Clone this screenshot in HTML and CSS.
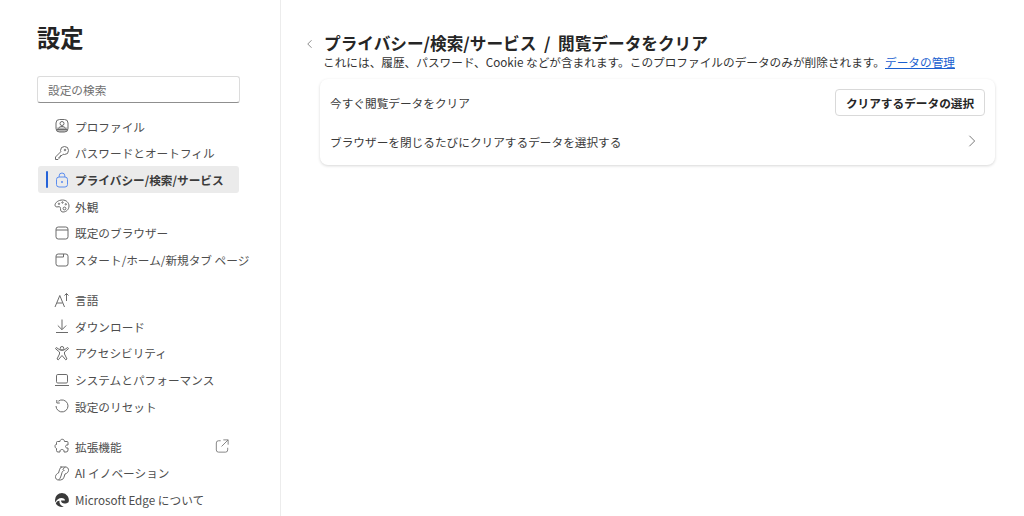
FILE: index.html
```html
<!DOCTYPE html>
<html lang="ja">
  <head>
    <meta charset="UTF-8" />
    <meta name="viewport" content="width=device-width, initial-scale=1.0" />
    <title>設定</title>
    <link rel="stylesheet" href="styles.css">
  </head>
  <body>
    <div class="page">
      <aside class="sidebar">
        <h1 class="sidebar-title">設定</h1>
        <input class="search" type="text" placeholder="設定の検索" />
        <nav class="nav">
          <div class="nav-group">
            <a class="nav-item"><svg class="icon" viewBox="0 0 16 16"><path class="icon-fill" d="M2.500 9.500h11V11a3 3 0 0 1-3 3h-5a3 3 0 0 1-3-3Z"/><rect x="2" y="1.500" width="12" height="12.500" rx="3.500"/><circle cx="8" cy="5.500" r="2"/><path d="M4.500 10.500c.5-1.500 2-2 3.500-2s3 .5 3.500 2M2.500 11.500h11"/></svg>プロファイル</a>
            <a class="nav-item"><svg class="icon" viewBox="0 0 16 16"><path d="M10.500 1.500a4 4 0 0 1 0 8c-.5 0-1-.1-1.400-.3L8 10.500H6.500V12H5v1.500l-1 1H1.500V12L6.800 6.700c-.2-.4-.3-.8-.3-1.200a4 4 0 0 1 4-4Z"/><circle cx="11" cy="5" r=".8"/></svg>パスワードとオートフィル</a>
            <a class="nav-item active"><span class="marker"></span><svg class="icon icon-blue" viewBox="0 0 16 16"><rect x="2.500" y="5" width="11" height="10" rx="2.500"/><path d="M5.200 5V3.800a2.800 2.800 0 0 1 5.600 0V5"/><circle cx="8" cy="10" r=".7"/></svg>プライバシー/検索/サービス</a>
            <a class="nav-item"><svg class="icon" viewBox="0 0 16 16"><path d="M8.500 2C4.500 2 1 4.500 1 7.200c0 1.500 1.500 2 3 1.600 1.500-.3 2.500 0 2.500 1.700 0 2.300.7 3.500 2.500 3.500 3.300 0 6-2.700 6-6S12.300 2 8.500 2Z"/><circle cx="5" cy="5.800" r=".7"/><circle cx="8.500" cy="4.500" r=".7"/><circle cx="11.800" cy="6.300" r=".7"/><circle cx="10.500" cy="10.500" r="1.400"/></svg>外観</a>
            <a class="nav-item"><svg class="icon" viewBox="0 0 16 16"><rect x="2" y="2" width="12" height="12" rx="2.200"/><path d="M2 5h12"/></svg>既定のブラウザー</a>
            <a class="nav-item"><svg class="icon" viewBox="0 0 16 16"><rect x="2" y="2" width="12" height="12" rx="2.200"/><path d="M2 5h7.500V2"/></svg>スタート/ホーム/新規タブ ページ</a>
          </div>
          <div class="nav-group">
            <a class="nav-item"><svg class="icon" viewBox="0 0 16 16"><path d="M1 15 5.800 3.500 10.500 15M3 11h5.500M10.500 3.500 12.500 1.500 14.500 3.500M12.500 1.500V9"/></svg>言語</a>
            <a class="nav-item"><svg class="icon" viewBox="0 0 16 16"><path d="M8 1.500v10M3.800 7.500 8 11.700l4.200-4.200M2 14.500h12"/></svg>ダウンロード</a>
            <a class="nav-item"><svg class="icon" viewBox="0 0 16 16"><circle cx="8" cy="3.300" r="1.800"/><path d="M2.300 2.500 6.300 5.200h3.400l4-2.700.8 1.200L10.500 7v2l2.500 5-1.300.8L8 10.500 4.300 14.800 3 14l2.500-5V7L1.500 3.700Z"/></svg>アクセシビリティ</a>
            <a class="nav-item"><svg class="icon" viewBox="0 0 16 16"><rect x="2.500" y="2.500" width="11" height="8.500" rx="1.300"/><path d="M1 13.500h14"/></svg>システムとパフォーマンス</a>
            <a class="nav-item"><svg class="icon" viewBox="0 0 16 16"><path d="M4.300 3.200A6 6 0 1 1 2 8M2.800 2v3h3"/></svg>設定のリセット</a>
          </div>
          <div class="nav-group">
            <a class="nav-item nav-external"><svg class="icon" viewBox="0 0 16 16"><path d="M6 3.500c0-3 4.500-3 4.500 0H13a1 1 0 0 1 1 1V7c-2-.5-2.500 1-2.500 1.500S12 10.500 14 10v2a2 2 0 0 1-2 2h-2c.5-2-1-2.500-2-2.500s-2.500.5-2 2.500H4a1.500 1.500 0 0 1-1.500-1.500v-2C.5 10 .5 6 2.500 6.500V4.500a1 1 0 0 1 1-1Z"/></svg>拡張機能<svg class="icon-external" viewBox="0 0 16 16"><path d="M6.500 2H4A2.500 2.500 0 0 0 1.500 4.500v8A2.500 2.500 0 0 0 4 15h8a2.500 2.500 0 0 0 2.500-2.500V10M9.500 1h5.500v5.500M15 1 7.500 8.500"/></svg></a>
            <a class="nav-item"><svg class="icon" viewBox="0 0 16 16"><path d="M6 2h5.500a3 3 0 0 1 3 3.500c-.3 1.800-1.500 3-3.500 3.500l-1 3.200A3.800 3.800 0 0 1 6.500 15h-2a3 3 0 0 1-3-3.500c.3-1.800 1.500-3 3-3.500l1-3.200C5.800 3.500 6.800 2.300 8 2"/><path d="M10.500 5.500c-1.200 0-2 .6-2.400 1.800L7 11c-.4 1.600-1.200 3-2.500 4M11.500 2c-1.200.5-2.200 1.500-2.700 3"/></svg>AI イノベーション</a>
            <a class="nav-item"><svg class="icon icon-solid" viewBox="0 0 16 16"><path d="M8 1a7 7 0 0 0-7 7c0 1 .2 1.800.5 2.500C2.500 7.500 5 6 7.500 6c2.200 0 3.500 1.300 3.500 2.500H7c0 2 1.500 3 3.500 3 1.500 0 3-.5 4-1.300A7 7 0 0 0 8 1Z"/><path d="M1.800 11.500C3 13.800 5.300 15 8 15c.8 0 1.500-.1 2.200-.4C7.500 14.500 5 12 5.500 8.800 3.500 9 2.300 10 1.800 11.500Z"/></svg>Microsoft Edge について</a>
          </div>
        </nav>
      </aside>

      <main class="content">
        <header class="content-header">
          <svg class="back" viewBox="0 0 16 16"><path d="M10 3 5 8l5 5"/></svg>
          <div>
            <h2 class="content-title">プライバシー/検索/サービス&nbsp; / &nbsp;閲覧データをクリア</h2>
            <p class="content-desc">これには、履歴、パスワード、Cookie などが含まれます。このプロファイルのデータのみが削除されます。<a class="link">データの管理</a></p>
          </div>
        </header>
        <section class="card">
          <div class="card-row">
            <span>今すぐ閲覧データをクリア</span>
            <button class="btn" type="button">クリアするデータの選択</button>
          </div>
          <div class="card-row">
            <span>ブラウザーを閉じるたびにクリアするデータを選択する</span>
            <svg class="chevron" viewBox="0 0 16 16"><path d="M5 2 11 8l-6 6"/></svg>
          </div>
        </section>
      </main>
    </div>
  </body>
</html>
```

FILE: styles.css
```css
/* Basic Reset */
* {
  margin: 0;
  padding: 0;
  box-sizing: border-box;
}

html,
body {
  height: 516px;
  overflow: hidden;
}

body {
  font-family: "Noto Sans CJK JP", "Noto Sans", sans-serif;
  font-size: 11.67px;
  color: #262626;
  background-color: #fff;
}

.page {
  display: flex;
  height: 516px;
}

/* Sidebar */
.sidebar {
  width: 281px;
  flex-shrink: 0;
  padding: 21px 41px 0 37px;
  border-right: 1px solid #ececec;
}

.sidebar-title {
  font-size: 23.3px;
  line-height: 33px;
  font-weight: 700;
  color: #242424;
}

.search {
  display: block;
  width: 203px;
  height: 27px;
  margin-top: 22px;
  padding: 0 10px;
  font-family: inherit;
  font-size: 11.67px;
  border: 1px solid #dcdcdc;
  border-bottom-color: #8f8f8f;
  border-radius: 3px;
  outline: none;
}

.search::placeholder {
  color: #707070;
}

.nav {
  margin: 10px 0 0 1px;
}

.nav-group + .nav-group {
  margin-top: 13.4px;
}

.nav-item {
  position: relative;
  display: flex;
  align-items: center;
  width: 240px;
  height: 26.66px;
  padding-left: 16px;
  color: #4d4d4d;
  white-space: nowrap;
}

.nav-item.active {
  width: 201px;
  font-weight: 700;
  color: #3b3b3b;
  background-color: #ebebeb;
  border-radius: 3px;
}

.marker {
  position: absolute;
  left: 8px;
  top: 5px;
  width: 2px;
  height: 17px;
  background-color: #2563d9;
  border-radius: 1px;
}

.icon {
  width: 16px;
  height: 16px;
  margin-right: 5px;
  flex-shrink: 0;
  fill: none;
  stroke: #6b6b6b;
  stroke-width: 1;
}

.icon-fill {
  fill: #b5b5b5;
  stroke: none;
}

.icon-blue {
  stroke: #5b8def;
}

.icon-solid {
  fill: #3a3a3a;
  stroke: none;
}

.icon-external {
  position: absolute;
  left: 177px;
  top: 6px;
  width: 14px;
  height: 14px;
  fill: none;
  stroke: #777;
  stroke-width: 1;
}

/* Main content */
.content {
  flex: 1;
  padding: 32px 29px 0 23px;
}

.content-header {
  display: flex;
  align-items: flex-start;
}

.back {
  width: 12px;
  height: 12px;
  margin: 6px 8px 0 0;
  fill: none;
  stroke: #666;
  stroke-width: 1;
}

.content-title {
  font-size: 16.67px;
  line-height: 22px;
  font-weight: 700;
  color: #262626;
}

.content-desc {
  margin-left: -1px;
  font-size: 11.67px;
  line-height: 15px;
  color: #333;
}

.link {
  color: #1a5fd0;
  text-decoration: underline;
}

.card {
  margin: 10px 0 0 16px;
  padding: 8px 10px 0 10px;
  height: 86px;
  background-color: #fff;
  border-radius: 8px;
  box-shadow: 0 1px 3px rgba(0, 0, 0, 0.16);
}

.card-row {
  display: flex;
  align-items: center;
  justify-content: space-between;
  height: 30px;
  font-size: 11.67px;
  color: #3a3a3a;
}

.card-row + .card-row {
  margin-top: 9px;
}

.btn {
  width: 150px;
  height: 27px;
  font-family: inherit;
  font-size: 11.67px;
  font-weight: 700;
  color: #262626;
  background-color: #fff;
  border: 1px solid #d9d9d9;
  border-radius: 4px;
}

.chevron {
  width: 14px;
  height: 14px;
  margin-right: 6px;
  fill: none;
  stroke: #666;
  stroke-width: 1;
}
```
